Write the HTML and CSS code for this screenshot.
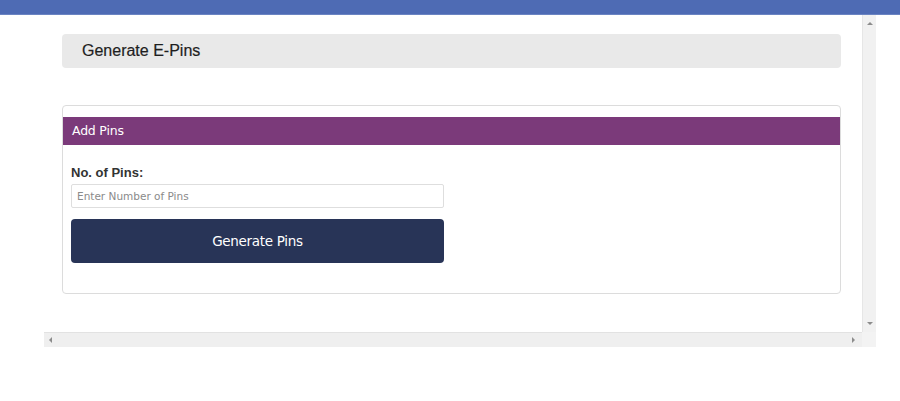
FILE: index.html
```html
<!DOCTYPE html>
<html>
<head>
<meta charset="utf-8">
<link rel="stylesheet" href="styles.css">
</head>
<body>
<div class="topbar"></div>
<div class="frame">
  <div class="viewport">
    <div class="page-title">Generate E-Pins</div>
    <div class="panel">
      <div class="panel-heading">Add Pins</div>
      <div class="panel-body">
        <label class="field-label">No. of Pins:</label>
        <input class="field-input" type="text" placeholder="Enter Number of Pins">
        <button class="btn-generate">Generate Pins</button>
      </div>
    </div>
  </div>
  <div class="vscroll">
    <span class="arrow up"></span>
    <span class="arrow down"></span>
  </div>
  <div class="hscroll">
    <span class="arrow left"></span>
    <span class="arrow right"></span>
  </div>
  <div class="corner"></div>
</div>
</body>
</html>
```
FILE: styles.css
```css
html, body {
  margin: 0;
  padding: 0;
  background: #fff;
  width: 900px;
  height: 401px;
  overflow: hidden;
}
.topbar {
  height: 15px;
  background: #4e6bb4;
  border-bottom: 1px solid #6b84c2;
  box-sizing: border-box;
}
.frame {
  margin-left: 44px;
  width: 832px;
  height: 332px;
  display: grid;
  grid-template-columns: 818px 14px;
  grid-template-rows: 317px 15px;
}
.viewport {
  padding: 19px 21px 0 18px;
  overflow: hidden;
}
.page-title {
  height: 34px;
  background: #e9e9e9;
  border-radius: 4px;
  font-family: "Liberation Sans", Arial, sans-serif;
  font-size: 16px;
  color: #1e1e1e;
  line-height: 34px;
  padding-left: 20px;
  -webkit-text-stroke: 0.2px #1e1e1e;
}
.panel {
  margin-top: 37px;
  height: 189px;
  box-sizing: border-box;
  border: 1px solid #dcdcdc;
  border-radius: 4px;
  padding-top: 11px;
}
.panel-heading {
  height: 28px;
  background: #7b3a7a;
  color: #fff;
  font-family: "DejaVu Sans", Verdana, sans-serif;
  font-size: 12.5px;
  line-height: 28px;
  padding-left: 9px;
  letter-spacing: -0.2px;
}
.panel-body {
  padding: 20px 8px 0 8px;
  display: flex;
  flex-direction: column;
  align-items: flex-start;
}
.field-label {
  font-family: "Liberation Sans", Arial, sans-serif;
  font-weight: bold;
  font-size: 13px;
  color: #333;
  line-height: 15px;
  margin-bottom: 4px;
}
.field-input {
  width: 373px;
  height: 24px;
  box-sizing: border-box;
  border: 1px solid #dedede;
  border-radius: 2px;
  padding: 0 5px;
  margin: 0;
  font-family: "DejaVu Sans", Verdana, sans-serif;
  font-size: 10.5px;
  outline: none;
}
.field-input::placeholder {
  color: #8a8a8a;
}
.btn-generate {
  margin-top: 11px;
  width: 373px;
  height: 44px;
  border: none;
  border-radius: 4px;
  background: #283457;
  color: #fff;
  font-family: "DejaVu Sans", Verdana, sans-serif;
  font-size: 13.5px;
  letter-spacing: -0.3px;
  padding: 0;
}
.vscroll {
  background: #f1f1f1;
  border-left: 1px solid #e6e6e6;
  position: relative;
}
.hscroll {
  background: #efefef;
  border-top: 1px solid #e2e2e2;
  position: relative;
}
.corner {
  background: #f3f3f3;
}
.arrow {
  position: absolute;
  width: 0;
  height: 0;
}
.arrow.up {
  top: 7px;
  left: 4px;
  border-left: 3px solid transparent;
  border-right: 3px solid transparent;
  border-bottom: 3px solid #8c8c8c;
}
.arrow.down {
  bottom: 7px;
  left: 4px;
  border-left: 3px solid transparent;
  border-right: 3px solid transparent;
  border-top: 3px solid #8c8c8c;
}
.arrow.left {
  top: 4px;
  left: 5px;
  border-top: 3px solid transparent;
  border-bottom: 3px solid transparent;
  border-right: 3px solid #8c8c8c;
}
.arrow.right {
  top: 4px;
  right: 7px;
  border-top: 3px solid transparent;
  border-bottom: 3px solid transparent;
  border-left: 3px solid #8c8c8c;
}
```
